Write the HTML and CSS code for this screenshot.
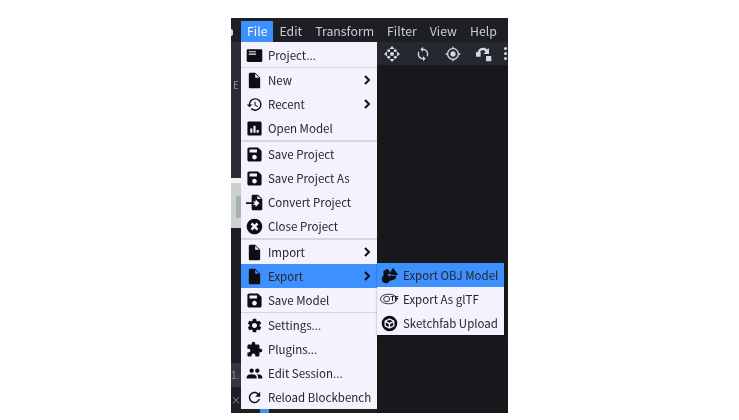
FILE: index.html
```html
<!DOCTYPE html>
<html lang="en">
<head>
<meta charset="utf-8">
<title>Blockbench File Menu</title>
<link rel="stylesheet" href="styles.css">
</head>
<body>
<svg class="defs" aria-hidden="true">
  <symbol id="i-project" viewBox="0 0 24 24"><path d="M21.500 3h-19C1.700 3 1 3.700 1 4.500v15c0 .8.7 1.500 1.500 1.500h19c.8 0 1.500-.7 1.500-1.500v-15c0-.8-.7-1.500-1.500-1.500zM14 11H4V9h10v2zm0-3.500H4V6h10v1.500z"/></symbol>
  <symbol id="i-file" viewBox="0 0 24 24"><path d="M6 1c-1.100 0-2 .9-2 2v18c0 1.100.9 2 2 2h12c1.100 0 2-.9 2-2V8l-7-7H6zm7 7V2.500L18.500 8H13z"/></symbol>
  <symbol id="i-history" viewBox="0 0 24 24"><path d="M13 3c-4.970 0-9 4.030-9 9H1l3.890 3.890.07.14L9 12H6c0-3.870 3.130-7 7-7s7 3.130 7 7-3.130 7-7 7c-1.930 0-3.680-.79-4.940-2.060l-1.420 1.420C8.270 19.990 10.510 21 13 21c4.970 0 9-4.030 9-9s-4.030-9-9-9zm-1 5v5l4.280 2.540.72-1.210-3.500-2.080V8H12z"/></symbol>
  <symbol id="i-chart" viewBox="0 0 24 24"><path d="M20 2H4c-1.100 0-2 .9-2 2v16c0 1.100.9 2 2 2h16c1.100 0 2-.9 2-2V4c0-1.100-.9-2-2-2zM9 18H6v-6h3v6zm4.500 0h-3V8h3v10zm4.500 0h-3v-4h3v4z"/></symbol>
  <symbol id="i-save" viewBox="0 0 24 24"><path d="M17 2H4.500C3.100 2 2 3.100 2 4.500v15C2 20.900 3.100 22 4.500 22h15c1.400 0 2.500-1.100 2.500-2.500V7l-5-5zm-5 17c-1.900 0-3.300-1.500-3.300-3.300S10.100 12.400 12 12.400s3.300 1.500 3.300 3.300S13.900 19 12 19zm3.500-10H5V5h10.500v4z"/></symbol>
  <symbol id="i-convert" viewBox="0 0 24 24"><path d="M10 1c-1.100 0-2 .9-2 2v7.500h5.500V7.500L19 13l-5.500 5.500v-3H8V21c0 1.100.9 2 2 2h11c1.100 0 2-.9 2-2V7l-6-6h-7zm6 6V2.500L21.500 7H16z"/><path d="M0 11.800h8V9l4.500 4L8 17v-2.800H0z"/></symbol>
  <symbol id="i-cancel" viewBox="0 0 24 24"><path d="M12 1C5.900 1 1 5.900 1 12s4.900 11 11 11 11-4.900 11-11S18.100 1 12 1zm5.500 14L15 17.500l-3-3-3 3L6.500 15l3-3-3-3L9 6.500l3 3 3-3L17.500 9l-3 3 3 3z"/></symbol>
  <symbol id="i-gear" viewBox="0 0 24 24"><path d="M19.140 12.940c.04-.3.06-.61.06-.94 0-.32-.02-.64-.07-.94l2.030-1.580a.49.49 0 0 0 .12-.61l-1.920-3.320a.488.488 0 0 0-.59-.22l-2.390.96c-.5-.38-1.030-.7-1.620-.94l-.36-2.540a.484.484 0 0 0-.48-.41h-3.840c-.24 0-.43.17-.47.41l-.36 2.540c-.59.24-1.130.57-1.620.94l-2.390-.96c-.22-.08-.47 0-.59.22L2.740 8.870c-.12.21-.08.47.12.61l2.030 1.580c-.05.3-.09.63-.09.94s.02.64.07.94l-2.030 1.580a.49.49 0 0 0-.12.61l1.920 3.320c.12.22.37.29.59.22l2.390-.96c.5.38 1.030.7 1.620.94l.36 2.540c.05.24.24.41.48.41h3.840c.24 0 .44-.17.47-.41l.36-2.540c.59-.24 1.130-.56 1.620-.94l2.390.96c.22.08.47 0 .59-.22l1.920-3.320c.12-.22.07-.47-.12-.61l-2.010-1.580zM12 15.600c-1.980 0-3.600-1.620-3.600-3.600s1.620-3.600 3.600-3.600 3.600 1.620 3.600 3.600-1.620 3.600-3.600 3.600z"/></symbol>
  <symbol id="i-puzzle" viewBox="0 0 24 24"><path d="M20.500 11H19V7c0-1.100-.9-2-2-2h-4V3.500C13 2.120 11.880 1 10.500 1S8 2.120 8 3.500V5H4c-1.100 0-1.990.9-1.990 2v3.800H3.500c1.490 0 2.700 1.210 2.700 2.700s-1.210 2.700-2.700 2.700H2V20c0 1.100.9 2 2 2h3.800v-1.500c0-1.490 1.210-2.700 2.700-2.700 1.490 0 2.700 1.210 2.700 2.700V22H17c1.100 0 2-.9 2-2v-4h1.500c1.380 0 2.500-1.120 2.500-2.500S21.880 11 20.500 11z"/></symbol>
  <symbol id="i-people" viewBox="0 0 24 24"><path d="M16 11c1.660 0 2.990-1.340 2.990-3S17.660 5 16 5c-1.660 0-3 1.340-3 3s1.340 3 3 3zm-8 0c1.660 0 2.990-1.340 2.990-3S9.660 5 8 5C6.340 5 5 6.340 5 8s1.340 3 3 3zm0 2c-2.330 0-7 1.170-7 3.500V19h14v-2.500c0-2.330-4.670-3.500-7-3.500zm8 0c-.29 0-.62.02-.97.05 1.160.84 1.970 1.970 1.970 3.450V19h6v-2.500c0-2.330-4.670-3.500-7-3.500z"/></symbol>
  <symbol id="i-refresh" viewBox="0 0 24 24"><path d="M17.650 6.350C16.200 4.900 14.210 4 12 4c-4.420 0-7.990 3.580-7.990 8s3.570 8 7.990 8c3.730 0 6.840-2.550 7.730-6h-2.080c-.82 2.330-3.040 4-5.650 4-3.310 0-6-2.690-6-6s2.690-6 6-6c1.660 0 3.140.69 4.220 1.780L13 11h7V4l-2.350 2.350z"/></symbol>
  <symbol id="i-chevron" viewBox="0 0 10 12"><path class="chev" d="M3 2 7 6 3 10"/></symbol>
  <symbol id="i-objects" viewBox="0 0 24 24"><path d="M17 1 11.500 10l9.500 2 3-1.500zM9 2.500 3.500 5.500V11l3.500 1 5-2.500V5.500z"/><circle cx="7" cy="17" r="6"/><path d="M12.500 11.500 22 13l-2 4-6 2.500-1.500-1z"/></symbol>
  <symbol id="i-gltf" viewBox="0 0 24 14"><ellipse class="ring" cx="10.500" cy="7" rx="10" ry="5.800"/><ellipse class="ring" cx="8" cy="7" rx="3.600" ry="3.200"/><text class="gltf-text" x="12.500" y="9.800">TF</text></symbol>
  <symbol id="i-sketchfab" viewBox="0 0 24 24"><path fill-rule="evenodd" d="M12 1a11 11 0 1 0 0 22 11 11 0 0 0 0-22zM5 8 12 4.500 19 8V16L12 19.500 5 16zM7.500 8.800 12 11l4.500-2.200L12 6.700zM6.800 10.500v4.300l4.200 2.200v-4.300zM17.200 10.500 13 12.700V17l4.200-2.200z"/></symbol>
  <symbol id="i-move" viewBox="0 0 24 24"><path d="M12 0l3.800 4.500H8.200zM12 24l-3.800-4.500h7.600zM0 12l4.500-3.800v7.600zM24 12l-4.500 3.800V8.200z"/><circle cx="12" cy="12" r="3"/><circle cx="7" cy="7" r="2.200"/><circle cx="17" cy="7" r="2.200"/><circle cx="7" cy="17" r="2.200"/><circle cx="17" cy="17" r="2.200"/></symbol>
  <symbol id="i-sync" viewBox="0 0 24 24"><path d="M12 4V1L8 5l4 4V6c3.310 0 6 2.690 6 6 0 1.010-.25 1.970-.7 2.800l1.460 1.460C19.540 15.030 20 13.570 20 12c0-4.420-3.580-8-8-8zm0 14c-3.310 0-6-2.690-6-6 0-1.010.25-1.970.7-2.800L5.240 7.740C4.460 8.970 4 10.430 4 12c0 4.420 3.580 8 8 8v3l4-4-4-4v3z"/></symbol>
  <symbol id="i-pivot" viewBox="0 0 24 24"><path d="M12 8c-2.210 0-4 1.790-4 4s1.790 4 4 4 4-1.790 4-4-1.790-4-4-4zm8.940 3c-.46-4.170-3.770-7.480-7.940-7.940V1h-2v2.060C6.830 3.520 3.520 6.830 3.060 11H1v2h2.060c.46 4.170 3.770 7.480 7.940 7.940V23h2v-2.060c4.170-.46 7.480-3.770 7.940-7.940H23v-2h-2.060zM12 19c-3.870 0-7-3.130-7-7s3.130-7 7-7 7 3.130 7 7-3.130 7-7 7z"/></symbol>
  <symbol id="i-transform" viewBox="0 0 24 24"><rect x="0" y="9" width="7" height="7" rx=".8"/><rect x="15" y="15" width="8" height="8" rx=".8"/><path d="M2.500 9C3.300 4.500 7 2.500 10.500 2.500c2.500 0 4.800 1 6.500 2.700L19.500 3v9h-8.500l3.200-3C13 7 12 6.500 10.500 6.500 8.500 6.500 6.700 7.500 6 9z"/></symbol>
</svg>

<div class="app">
  <header class="menubar">
    <div class="logo-edge"></div>
    <nav class="menubar-items">
      <span class="menubar-item is-open">File</span>
      <span class="menubar-item">Edit</span>
      <span class="menubar-item">Transform</span>
      <span class="menubar-item">Filter</span>
      <span class="menubar-item">View</span>
      <span class="menubar-item">Help</span>
    </nav>
  </header>

  <div class="workspace">
    <aside class="sidebar">
      <div class="sb-top"><span class="sb-label">E</span></div>
      <div class="sb-preview"><span class="sb-pixel"></span></div>
      <div class="sb-mid"></div>
      <div class="sb-status"><span class="sb-num">1.</span></div>
      <div class="sb-end"><span class="sb-x">×</span></div>
    </aside>

    <div class="menu-col">
      <ul class="menu">
        <li class="row"><svg class="ico"><use href="#i-project"/></svg><span class="label">Project...</span></li>
        <li class="sep"></li>
        <li class="row"><svg class="ico"><use href="#i-file"/></svg><span class="label">New</span><svg class="chevron"><use href="#i-chevron"/></svg></li>
        <li class="row"><svg class="ico"><use href="#i-history"/></svg><span class="label">Recent</span><svg class="chevron"><use href="#i-chevron"/></svg></li>
        <li class="row"><svg class="ico"><use href="#i-chart"/></svg><span class="label">Open Model</span></li>
        <li class="sep sep-wide"></li>
        <li class="row"><svg class="ico"><use href="#i-save"/></svg><span class="label">Save Project</span></li>
        <li class="row"><svg class="ico"><use href="#i-save"/></svg><span class="label">Save Project As</span></li>
        <li class="row"><svg class="ico"><use href="#i-convert"/></svg><span class="label">Convert Project</span></li>
        <li class="row"><svg class="ico"><use href="#i-cancel"/></svg><span class="label">Close Project</span></li>
        <li class="sep sep-wide"></li>
        <li class="row"><svg class="ico"><use href="#i-file"/></svg><span class="label">Import</span><svg class="chevron"><use href="#i-chevron"/></svg></li>
        <li class="row is-active"><svg class="ico"><use href="#i-file"/></svg><span class="label">Export</span><svg class="chevron"><use href="#i-chevron"/></svg>
          <ul class="menu submenu">
            <li class="row is-active"><svg class="ico"><use href="#i-objects"/></svg><span class="label">Export OBJ Model</span></li>
            <li class="row"><svg class="ico ico-gltf"><use href="#i-gltf"/></svg><span class="label">Export As glTF</span></li>
            <li class="row"><svg class="ico"><use href="#i-sketchfab"/></svg><span class="label">Sketchfab Upload</span></li>
          </ul>
        </li>
        <li class="row"><svg class="ico"><use href="#i-save"/></svg><span class="label">Save Model</span></li>
        <li class="sep"></li>
        <li class="row"><svg class="ico"><use href="#i-gear"/></svg><span class="label">Settings...</span></li>
        <li class="row"><svg class="ico"><use href="#i-puzzle"/></svg><span class="label">Plugins...</span></li>
        <li class="row"><svg class="ico"><use href="#i-people"/></svg><span class="label">Edit Session...</span></li>
        <li class="row"><svg class="ico"><use href="#i-refresh"/></svg><span class="label">Reload Blockbench</span></li>
      </ul>
      <div class="menu-foot"><span class="foot-tab"></span></div>
    </div>

    <main class="viewport">
      <div class="toolbar">
        <svg class="tool"><use href="#i-move"/></svg>
        <svg class="tool"><use href="#i-sync"/></svg>
        <svg class="tool"><use href="#i-pivot"/></svg>
        <svg class="tool"><use href="#i-transform"/></svg>
        <span class="tool-more"><i></i><i></i><i></i></span>
      </div>
    </main>
  </div>
</div>
</body>
</html>
```

FILE: styles.css
```css
* { box-sizing: border-box; }

html, body { height: 100%; }

body {
  margin: 0;
  background: #ffffff;
  display: flex;
  justify-content: center;
  align-items: flex-start;
  overflow: hidden;
  font-family: "Noto Sans CJK SC", "Noto Sans", sans-serif;
}

.defs { display: none; }

.app {
  width: 277px;
  height: 395px;
  margin-top: 18px;
  display: flex;
  flex-direction: column;
  background: #17181c;
  filter: blur(0.45px);
}

/* menu bar */
.menubar {
  height: 24px;
  flex: none;
  display: flex;
  background: #1d1f24;
  padding-top: 3px;
}

.logo-edge {
  width: 10px;
  display: flex;
  align-items: center;
}

.logo-edge::before {
  content: "";
  width: 2px;
  height: 7px;
  margin-top: 1px;
  background: #d8d8d8;
  border-radius: 0 2px 2px 0;
}

.menubar-items { display: flex; }

.menubar-item {
  height: 21px;
  padding: 0 6.5px;
  font-size: 12.3px;
  line-height: 21px;
  color: #c9ccd3;
}

.menubar-item.is-open {
  background: #3e90ff;
  color: #f6f6ff;
  width: 32px;
  padding: 0 6px;
}

/* body */
.workspace {
  flex: 1;
  display: flex;
  min-height: 0;
}

.sidebar {
  width: 10px;
  flex: none;
  display: flex;
  flex-direction: column;
  overflow: hidden;
  font-size: 10px;
  color: #8f939b;
}

.sb-top {
  height: 136px;
  background: #2a2d34;
  padding: 36px 0 0 2px;
  line-height: 14px;
}

.sb-preview {
  height: 50px;
  background: linear-gradient(#f4f4f4 0 5px, #ccd0d0 5px);
  padding: 18px 0 0 5px;
}

.sb-pixel {
  display: block;
  width: 5px;
  height: 22px;
  background: #a9b0b0;
}

.sb-mid { height: 136px; background: #1d1f24; }

.sb-status {
  height: 24px;
  background: #33363d;
  line-height: 24px;
}

.sb-end {
  flex: 1;
  background: #1d1f24;
  line-height: 26px;
}

/* menus */
.menu-col {
  width: 136px;
  flex: none;
  display: flex;
  flex-direction: column;
}

.menu {
  list-style: none;
  margin: 0;
  padding: 1px 0 0;
  background: #f3f2fd;
  color: #25262b;
}

.menu-foot {
  flex: 1;
  background: #1d1f24;
  padding-left: 19px;
}

.foot-tab {
  display: block;
  width: 9px;
  height: 100%;
  background: #3e90ff;
}

.row {
  position: relative;
  height: 24px;
  display: flex;
  align-items: center;
  padding-left: 5px;
  font-size: 11.5px;
  white-space: nowrap;
}

.row.is-active { background: #3e90ff; }

.sep { height: 1px; background: #d6d5e0; }
.sep-wide { height: 2px; }

.ico {
  width: 17px;
  height: 17px;
  flex: none;
  fill: #0e0e12;
  margin-right: 5px;
}

.submenu .ico.ico-gltf {
  width: 20px;
  height: 12px;
  margin-right: 3px;
  margin-left: -1px;
}

.ring {
  fill: none;
  stroke: #0e0e12;
  stroke-width: 1;
}

.gltf-text {
  font-family: "Liberation Sans", sans-serif;
  font-size: 8px;
  font-weight: 700;
  fill: #0e0e12;
}

.label {
  flex: 1;
  padding-bottom: 1px;
}

.chevron {
  width: 10px;
  height: 12px;
  flex: none;
  margin-right: 5px;
}

.chev {
  fill: none;
  stroke: #0e0e12;
  stroke-width: 2;
}

.submenu {
  position: absolute;
  left: 136px;
  top: -1px;
  width: 127px;
  padding: 0;
  box-shadow: 0 1px 2px rgba(0, 0, 0, 0.35);
}

.submenu .row { padding-left: 4px; }
.submenu .ico { margin-right: 5px; }

/* right side */
.viewport {
  flex: 1;
  min-width: 0;
  overflow: hidden;
  background: #17181c;
}

.toolbar {
  height: 23px;
  display: flex;
  align-items: center;
  gap: 14.5px;
  padding-left: 7px;
  background: #25282e;
}

.tool {
  width: 16px;
  height: 16px;
  flex: none;
  fill: #d5d8de;
}

.tool-more {
  display: flex;
  flex-direction: column;
  gap: 2px;
  margin-left: -2.5px;
}

.tool-more i {
  display: block;
  width: 3px;
  height: 3px;
  background: #d5d8de;
  border-radius: 50%;
}
```
